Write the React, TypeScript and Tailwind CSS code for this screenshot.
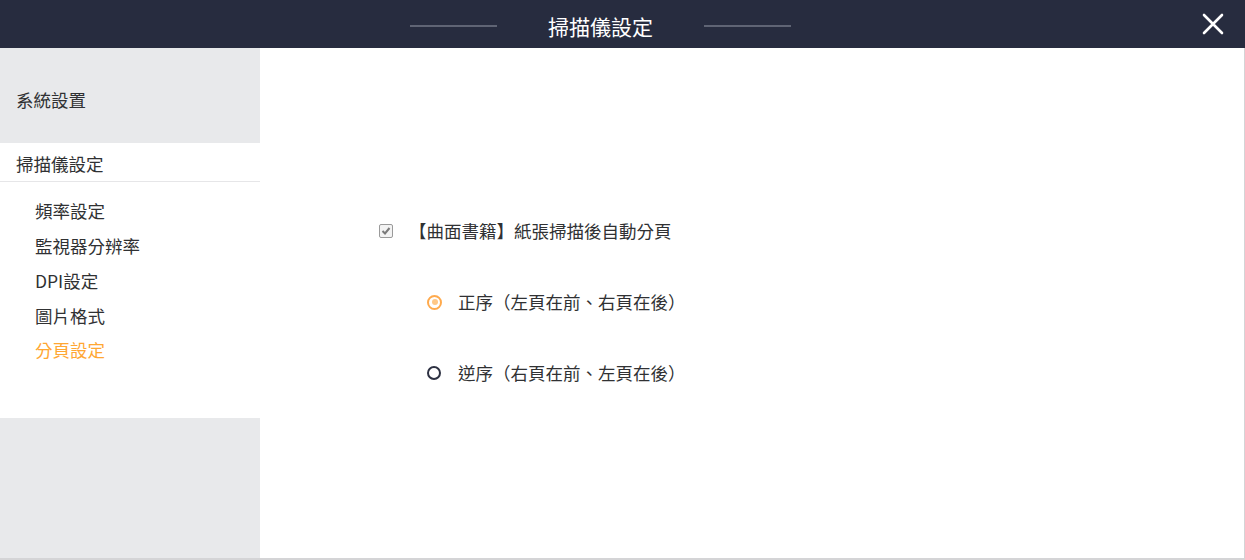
import React from "react";

const font = { fontFamily: '"Noto Sans CJK TC", "Noto Sans", sans-serif' };

export default function App() {
  const items = ["頻率設定", "監視器分辨率", "DPI設定", "圖片格式", "分頁設定"];
  return (
    <div className="w-[1245px] h-[560px] flex flex-col bg-white text-[#303133]" style={font}>
      <header className="h-[48px] shrink-0 bg-[#272c3f] flex items-center relative">
        <div className="flex-1 flex items-center justify-center gap-[51px] pt-[4px] pr-[44px]">
          <div className="w-[87px] h-[2px] bg-[#5f6474]" />
          <div className="text-white text-[21px] leading-none">掃描儀設定</div>
          <div className="w-[87px] h-[2px] bg-[#5f6474]" />
        </div>
        <button className="absolute right-[20px] top-[12px] w-[24px] h-[24px] flex items-center justify-center">
          <svg width="22" height="22" viewBox="0 0 22 22">
            <path d="M2 2 L20 20 M20 2 L2 20" stroke="#ffffff" strokeWidth="2.6" strokeLinecap="round" />
          </svg>
        </button>
      </header>
      <div className="flex-1 flex border-b-2 border-r border-[#d4d4d6]">
        <aside className="w-[260px] shrink-0 bg-[#e8e9eb] flex flex-col">
          <div className="h-[95px] flex items-center pl-[16px] pt-[10px] text-[17.5px]">系統設置</div>
          <div className="bg-white flex flex-col h-[275px]">
            <div className="h-[39px] flex items-center pl-[16px] pt-[4px] text-[17.5px] border-b border-[#e6e6e8]">掃描儀設定</div>
            <div className="flex flex-col pt-[12px]">
              {items.map((t, i) => (
                <div
                  key={t}
                  className={`h-[34.8px] flex items-center pl-[35px] text-[17.5px] ${i === 4 ? "text-[#ffa733]" : ""}`}
                >
                  {t}
                </div>
              ))}
            </div>
          </div>
        </aside>
        <main className="flex-1 flex flex-col pt-[172px] pl-[118px] text-[17.5px]">
          <div className="h-[22px] flex items-center">
            <span className="w-[14px] h-[14px] border border-[#9a9a9a] rounded-[2px] flex items-center justify-center bg-[#f3f3f3] mr-[16px] ml-[1px]">
              <svg width="10" height="10" viewBox="0 0 10 10">
                <path d="M1.5 5 L4 7.5 L8.5 2" stroke="#7a7a7a" strokeWidth="2" fill="none" />
              </svg>
            </span>
            <span>【曲面書籍】紙張掃描後自動分頁</span>
          </div>
          <div className="h-[22px] flex items-center mt-[49px] pl-[49px]">
            <span className="w-[15px] h-[15px] rounded-full border-[2.5px] border-[#ffaa4d] flex items-center justify-center mr-[16px]">
              <span className="w-[6px] h-[6px] rounded-full bg-[#ffc887]" />
            </span>
            <span>正序（左頁在前、右頁在後）</span>
          </div>
          <div className="h-[22px] flex items-center mt-[49px] pl-[49px]">
            <span className="w-[14px] h-[14px] rounded-full border-[2.5px] border-[#2d3142] mr-[17px]" />
            <span>逆序（右頁在前、左頁在後）</span>
          </div>
        </main>
      </div>
    </div>
  );
}
